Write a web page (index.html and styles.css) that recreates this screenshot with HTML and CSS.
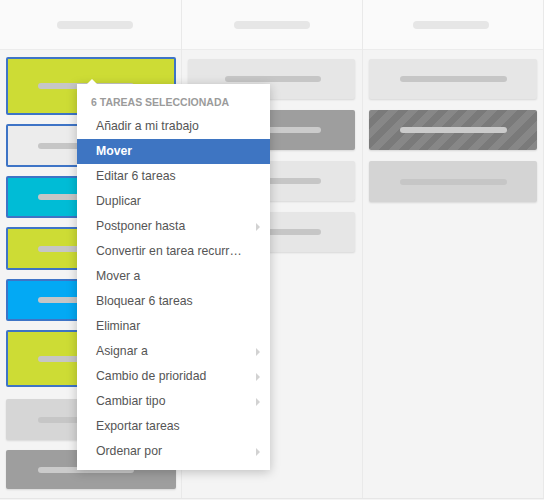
FILE: index.html
```html
<!DOCTYPE html>
<html lang="es">
<head>
<meta charset="utf-8">
<title>Tablero</title>
<link rel="stylesheet" href="styles.css">
</head>
<body>
<div class="board">
  <div class="col col-1">
    <div class="col-head"><span class="head-pill"></span></div>
    <div class="col-body">
      <div class="card lime selected h58"><span class="pill p96"></span></div>
      <div class="card light selected h43"><span class="pill p96"></span></div>
      <div class="card cyan selected h42"><span class="pill p96"></span></div>
      <div class="card lime selected h43"><span class="pill p96"></span></div>
      <div class="card blue selected h42"><span class="pill p96"></span></div>
      <div class="card lime selected h57 mb12"><span class="pill p96"></span></div>
      <div class="card mid h41 mb10"><span class="pill p96"></span></div>
      <div class="card dark h39"><span class="pill light-pill p96"></span></div>
    </div>
  </div>
  <div class="col col-2">
    <div class="col-head"><span class="head-pill"></span></div>
    <div class="col-body spaced">
      <div class="card pale h40"><span class="pill p96"></span></div>
      <div class="card dark h40"><span class="pill light-pill p96"></span></div>
      <div class="card pale h40"><span class="pill p96"></span></div>
      <div class="card pale h40"><span class="pill p96"></span></div>
    </div>
  </div>
  <div class="col col-3">
    <div class="col-head"><span class="head-pill"></span></div>
    <div class="col-body spaced">
      <div class="card pale h40"><span class="pill p107"></span></div>
      <div class="card striped h40"><span class="pill light-pill p107"></span></div>
      <div class="card mid2 h41"><span class="pill p107"></span></div>
    </div>
  </div>

  <div class="menu">
    <div class="menu-title">6 TAREAS SELECCIONADA</div>
    <div class="menu-item">Añadir a mi trabajo</div>
    <div class="menu-item active">Mover</div>
    <div class="menu-item">Editar 6 tareas</div>
    <div class="menu-item">Duplicar</div>
    <div class="menu-item sub">Postponer hasta</div>
    <div class="menu-item">Convertir en tarea recurrente</div>
    <div class="menu-item">Mover a</div>
    <div class="menu-item">Bloquear 6 tareas</div>
    <div class="menu-item">Eliminar</div>
    <div class="menu-item sub">Asignar a</div>
    <div class="menu-item sub">Cambio de prioridad</div>
    <div class="menu-item sub">Cambiar tipo</div>
    <div class="menu-item">Exportar tareas</div>
    <div class="menu-item sub">Ordenar por</div>
  </div>
</div>
</body>
</html>
```

FILE: styles.css
```css
* { box-sizing: border-box; }
html, body { margin: 0; padding: 0; }
body {
  width: 544px;
  height: 500px;
  background: #f4f4f4;
  font-family: "Liberation Sans", Arial, sans-serif;
  overflow: hidden;
}
.board {
  position: relative;
  display: flex;
  width: 544px;
  height: 499px;
  border-bottom: 1px solid #e6e6e6;
}
.col {
  display: flex;
  flex-direction: column;
  border-right: 1px solid #e9e9e9;
  height: 100%;
}
.col-1 { width: 182px; }
.col-2 { width: 181px; }
.col-3 { width: 181px; }
.col-head {
  height: 50px;
  background: #fafafa;
  border-bottom: 1px solid #ececec;
  display: flex;
  align-items: center;
}
.col-1 .col-head { padding-left: 57px; }
.col-2 .col-head { padding-left: 52px; }
.col-3 .col-head { padding-left: 50px; }
.head-pill {
  width: 76px;
  height: 8px;
  border-radius: 4px;
  background: #e6e6e6;
}
.col-body {
  display: flex;
  flex-direction: column;
  padding: 7px 0 0 6px;
}
.col-body .card { margin-bottom: 9px; }
.col-1 .card { width: 170px; }
.col-2 .card { width: 167px; }
.col-3 .card { width: 168px; }
.col-body.spaced { padding-top: 9px; }
.col-body.spaced .card { margin-bottom: 11px; }
.card {
  border-radius: 2px;
  display: flex;
  align-items: center;
  box-shadow: 0 1px 2px rgba(0,0,0,0.12);
}
.card.selected {
  border: 2px solid #3e74c6;
  box-shadow: none;
  padding-left: 30px;
}
.card:not(.selected) { padding-left: 32px; }
.col-2 .card { padding-left: 37px; }
.col-3 .card { padding-left: 31px; }
.h58 { height: 58px; }
.h57 { height: 57px; }
.h43 { height: 43px; }
.h42 { height: 42px; }
.h41 { height: 41px; }
.h40 { height: 40px; }
.h39 { height: 39px; }
.col-body .mb12 { margin-bottom: 12px; }
.col-body .mb10 { margin-bottom: 10px; }
.lime { background: #cddc35; }
.light { background: #ececec; }
.cyan { background: #00bcd6; }
.blue { background: #03a9f4; }
.mid { background: #d6d6d6; }
.mid2 { background: #d4d4d4; }
.dark { background: #9e9e9e; }
.pale { background: #e6e6e6; }
.striped {
  background: repeating-linear-gradient(135deg, #878787 0 7px, #7a7a7a 7px 14px);
}
.pill {
  height: 6px;
  border-radius: 3px;
  background: #c6c6c6;
}
.light-pill { background: #cbcbcb; }
.p96 { width: 96px; }
.p107 { width: 107px; }

.menu {
  position: absolute;
  left: 77px;
  top: 84px;
  width: 193px;
  height: 386px;
  background: #ffffff;
  box-shadow: 0 2px 10px rgba(0,0,0,0.22);
  padding: 6px 0 6px 0;
}
.menu::before {
  content: "";
  position: absolute;
  left: 10px;
  top: -5px;
  border-left: 5px solid transparent;
  border-right: 5px solid transparent;
  border-bottom: 5px solid #ffffff;
}
.menu-title {
  height: 24px;
  line-height: 24px;
  padding-left: 14px;
  font-size: 10.5px;
  font-weight: bold;
  color: #9b9b9b;
  white-space: nowrap;
}
.menu-item {
  position: relative;
  height: 25px;
  line-height: 25px;
  padding: 0 26px 0 19px;
  font-size: 12.25px;
  color: #555555;
  white-space: nowrap;
  overflow: hidden;
  text-overflow: ellipsis;
}
.menu-item.active {
  background: #3e75c2;
  color: #ffffff;
  font-weight: bold;
}
.menu-item.sub::after {
  content: "";
  position: absolute;
  right: 10px;
  top: 9px;
  border-top: 4px solid transparent;
  border-bottom: 4px solid transparent;
  border-left: 4px solid #d2d2d2;
}
```
